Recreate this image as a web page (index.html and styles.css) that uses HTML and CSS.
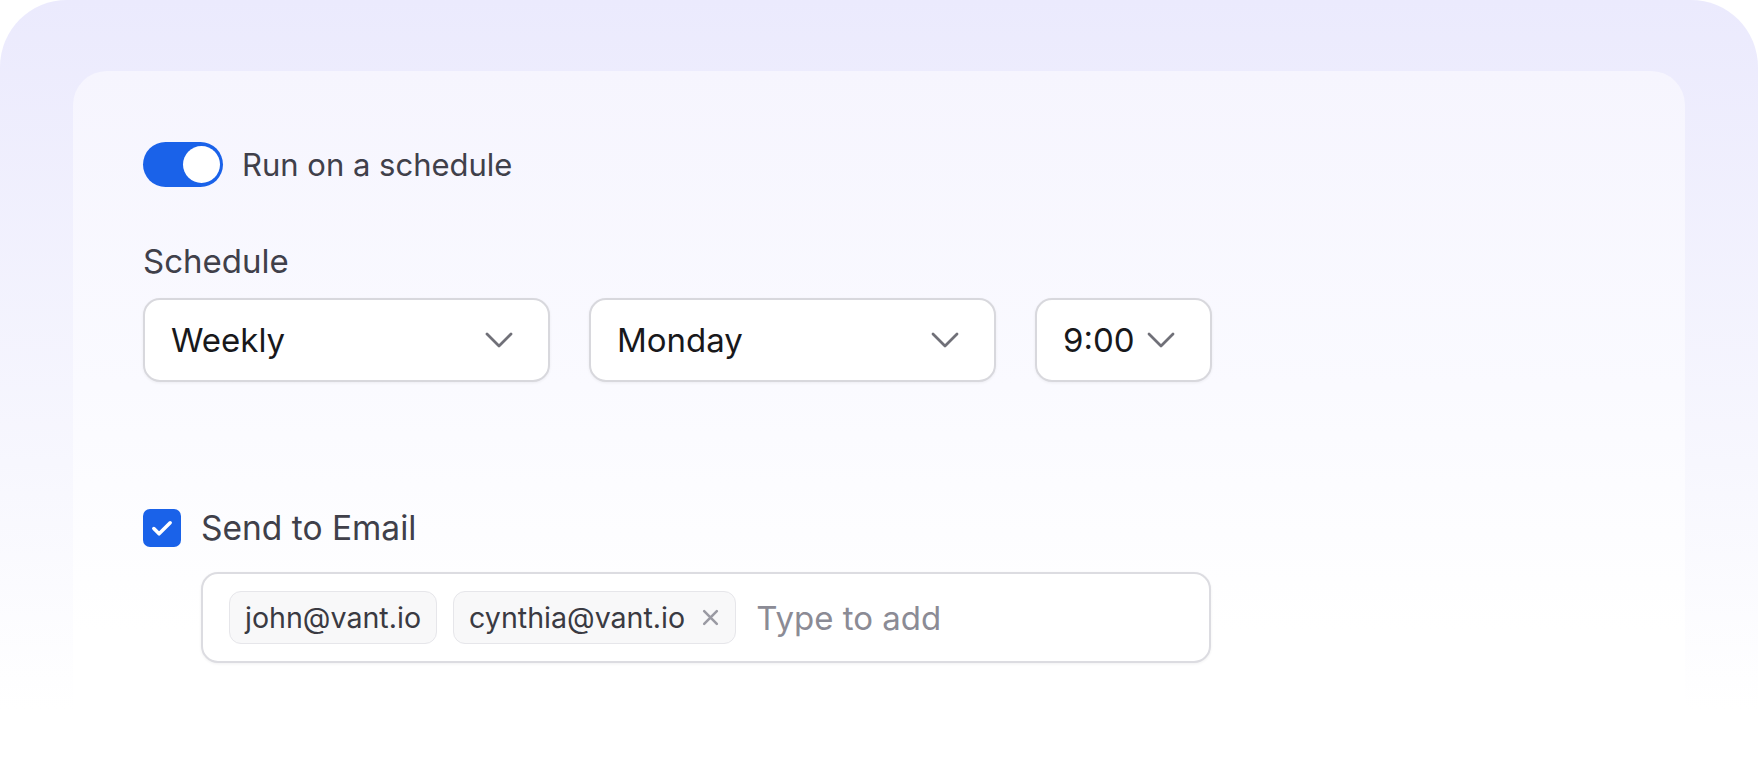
FILE: index.html
```html
<!DOCTYPE html>
<html lang="en">

<head>
    <meta charset="UTF-8">
    <meta name="viewport" content="width=device-width, initial-scale=1.0">
    <title>Schedule settings</title>
    <link rel="stylesheet" href="styles.css">
</head>

<body>
    <div class="frame">
        <div class="card">
            <!-- run on schedule -->
            <div class="toggle-row">
                <span class="toggle"><span class="knob"></span></span>
                <span class="label">Run on a schedule</span>
            </div>

            <div class="field-label">Schedule</div>
            <div class="selects">
                <div class="select wide">
                    <span>Weekly</span>
                    <svg class="chev" viewBox="0 0 28 16"><path d="M2 2l12 12L26 2" /></svg>
                </div>
                <div class="select wide">
                    <span>Monday</span>
                    <svg class="chev" viewBox="0 0 28 16"><path d="M2 2l12 12L26 2" /></svg>
                </div>
                <div class="select short">
                    <span>9:00</span>
                    <svg class="chev" viewBox="0 0 28 16"><path d="M2 2l12 12L26 2" /></svg>
                </div>
            </div>

            <!-- email -->
            <div class="check-row">
                <span class="checkbox">
                    <svg viewBox="0 0 24 24"><path d="M5 12.5l4.5 4.5L19 7.5" /></svg>
                </span>
                <span class="label big">Send to Email</span>
            </div>
            <div class="emails">
                <span class="chip">john@vant.io</span>
                <span class="chip">cynthia@vant.io
                    <svg class="x" viewBox="0 0 18 18"><path d="M3 3l12 12M15 3L3 15" /></svg>
                </span>
                <span class="placeholder">Type to add</span>
            </div>
        </div>
    </div>
</body>

</html>
```

FILE: styles.css
```css
body {
    margin: 0;
    background: #fff;
    font-family: Inter, "Noto Sans", sans-serif;
}

.frame {
    height: 771px;
    box-sizing: border-box;
    padding: 71px 73px 0 73px;
    border-radius: 67px 67px 0 0;
    background: linear-gradient(#ebeafd, #f7f7fe 60%, #fff 92%);
    overflow: hidden;
}

.card {
    height: 100%;
    box-sizing: border-box;
    padding: 71px 0 0 70px;
    border-radius: 34px 34px 0 0;
    background: linear-gradient(#f6f5fe, #fafaff 45%, #fff 80%);
}

.toggle-row,
.check-row {
    display: flex;
    align-items: center;
}

.label {
    font-size: 31px;
    color: #40404a;
}

.label.big {
    font-size: 33.5px;
    line-height: 38px;
}

.toggle {
    display: flex;
    justify-content: flex-end;
    align-items: center;
    width: 80px;
    height: 45px;
    box-sizing: border-box;
    padding: 3px;
    border-radius: 23px;
    background: #1a62e9;
    margin-right: 19px;
}

.knob {
    width: 37px;
    height: 37px;
    border-radius: 50%;
    background: #fff;
}

.field-label {
    margin-top: 55px;
    font-size: 33px;
    line-height: 38px;
    color: #40404a;
}

.selects {
    display: flex;
    gap: 39px;
    margin-top: 18px;
}

.select {
    display: flex;
    align-items: center;
    justify-content: space-between;
    box-sizing: border-box;
    height: 84px;
    padding: 0 35px 0 26px;
    border: 2px solid #d8d8dd;
    border-radius: 17px;
    background: #fff;
    box-shadow: 0 1px 3px rgba(20, 20, 40, 0.06);
    font-size: 33px;
    color: #18181b;
}

.select.wide {
    width: 407px;
}

.select.short {
    width: 177px;
}

.chev {
    width: 28px;
    height: 16px;
    fill: none;
    stroke: #707078;
    stroke-width: 2.8;
    stroke-linecap: round;
    stroke-linejoin: round;
}

.check-row {
    margin-top: 127px;
}

.checkbox {
    display: flex;
    align-items: center;
    justify-content: center;
    width: 38px;
    height: 38px;
    border-radius: 7px;
    background: #1a62e9;
    margin-right: 20px;
}

.checkbox svg {
    width: 28px;
    height: 28px;
    fill: none;
    stroke: #fff;
    stroke-width: 3;
    stroke-linecap: round;
    stroke-linejoin: round;
}

.emails {
    display: flex;
    align-items: center;
    gap: 16px;
    box-sizing: border-box;
    width: 1010px;
    height: 91px;
    margin: 25px 0 0 58px;
    padding: 0 26px;
    border: 2px solid #dcdce1;
    border-radius: 17px;
    background: #fff;
    box-shadow: 0 1px 3px rgba(20, 20, 40, 0.06);
}

.chip {
    display: flex;
    align-items: center;
    gap: 16px;
    height: 53px;
    box-sizing: border-box;
    padding: 0 15px;
    border: 1.5px solid #e6e6ea;
    border-radius: 12px;
    background: #f8f8f9;
    font-size: 28.6px;
    color: #3a3a42;
}

.chip .x {
    width: 19px;
    height: 19px;
    fill: none;
    stroke: #9a9aa3;
    stroke-width: 2.4;
    stroke-linecap: round;
}

.placeholder {
    margin-left: 4px;
    font-size: 33px;
    color: #8b8b95;
}
```
